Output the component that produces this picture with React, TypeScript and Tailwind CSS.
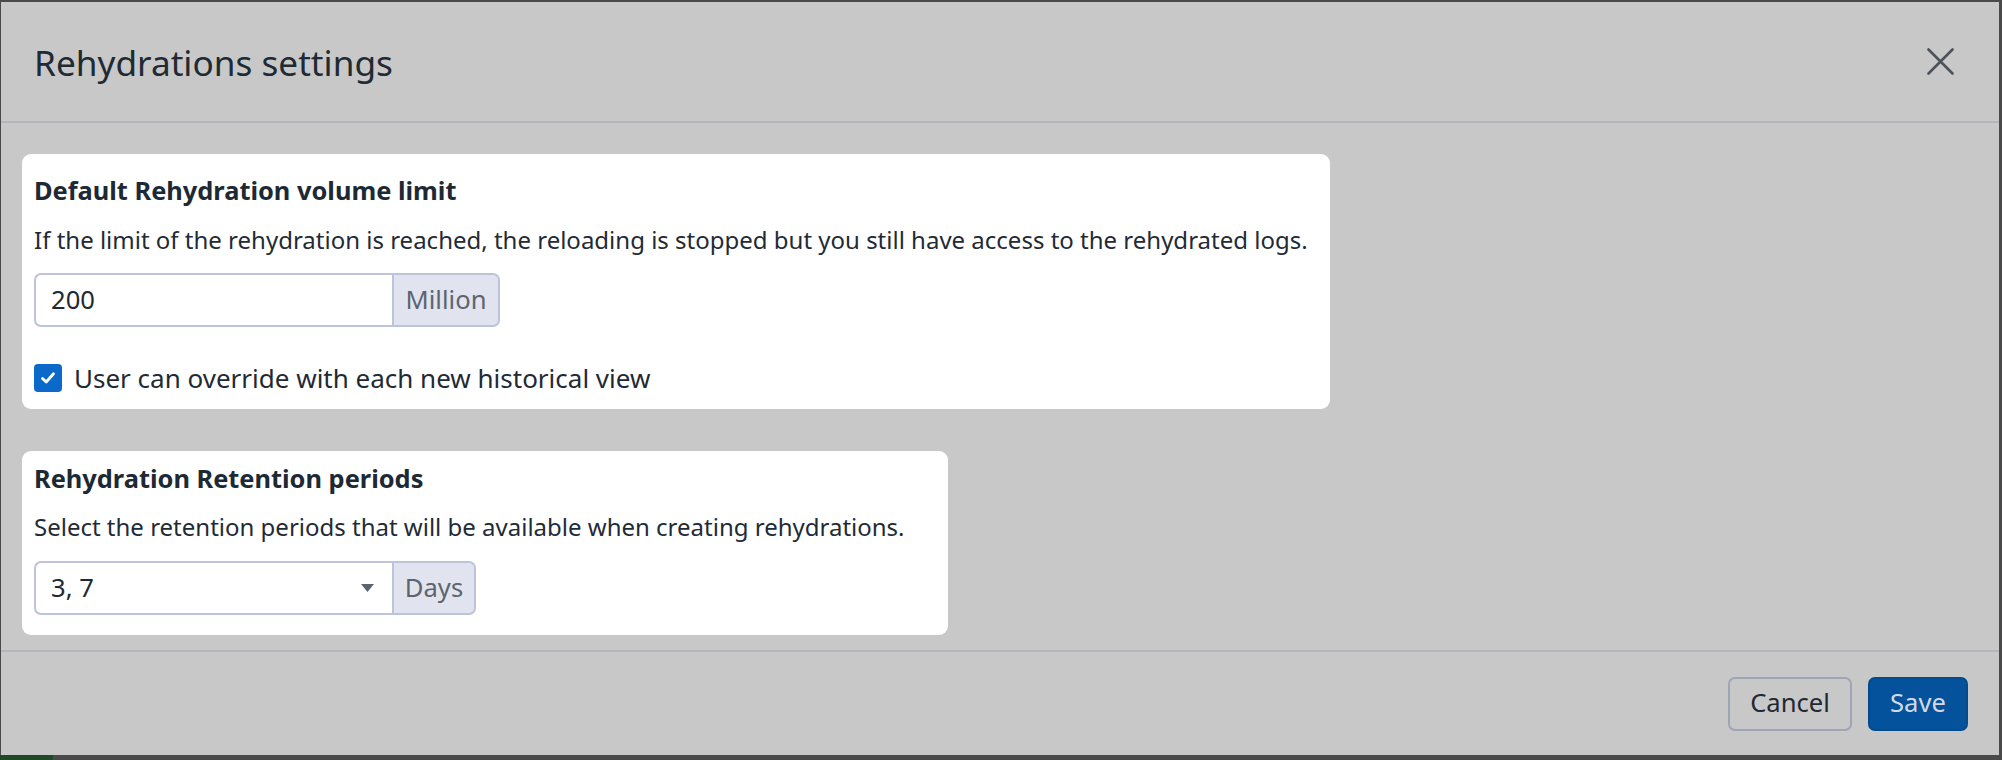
import React from "react";

const CloseIcon = () => (
  <svg width="27" height="27" viewBox="0 0 27 27" fill="none">
    <path d="M1.5 1.5L25.5 25.5M25.5 1.5L1.5 25.5" stroke="#4b5259" strokeWidth="2.6" strokeLinecap="round" />
  </svg>
);

const CheckIcon = () => (
  <svg width="18" height="18" viewBox="0 0 18 18" fill="none">
    <path d="M3.5 9.5L7.2 13L14.5 4.8" stroke="white" strokeWidth="2.8" strokeLinecap="round" strokeLinejoin="round" />
  </svg>
);

const App = () => {
  return (
    <div className="relative w-[2002px] h-[760px] overflow-hidden bg-[#4a4a4a] font-['Noto_Sans',sans-serif]">
      <div className="ml-[1px] mt-[2px] w-[1998px] h-[753px] bg-[#c8c8c8] flex flex-col">
        {/* header */}
        <div className="h-[119px] flex items-center justify-between pl-[33px] pr-[45px]">
          <h1 className="text-[35.2px] leading-[42px] text-[#1f2a33]">Rehydrations settings</h1>
          <button className="w-[27px] h-[27px] flex items-center justify-center">
            <CloseIcon />
          </button>
        </div>
        <div className="h-[2px] bg-[#b4b5be]" />

        {/* body */}
        <div className="flex-1 flex flex-col items-start pl-[21px] pt-[31px]">
          <div className="w-[1308px] bg-white rounded-[9px] pt-[17px] pb-[12px] px-[12px]">
            <div className="text-[25.4px] leading-[38px] font-bold text-[#1d2934]">
              Default Rehydration volume limit
            </div>
            <p className="mt-[14px] text-[24px] leading-[34px] text-[#1f2b36]">
              If the limit of the rehydration is reached, the reloading is stopped but you still have access to the rehydrated logs.
            </p>
            <div className="mt-[16px] flex h-[54px] w-[466px]">
              <div className="w-[358px] flex items-center border-2 border-r-0 border-[#bcc3da] rounded-l-[7px] pl-[15px] text-[25.6px] text-[#1f2933]">
                200
              </div>
              <div className="flex-1 flex items-center justify-center border-2 border-[#bcc3da] rounded-r-[7px] bg-[#e1e4ee] text-[25.6px] text-[#5d6470]">
                Million
              </div>
            </div>
            <label className="mt-[32px] flex items-center gap-[12px] h-[38px]">
              <span className="w-[28px] h-[28px] rounded-[4px] bg-[#0b69c9] flex items-center justify-center">
                <CheckIcon />
              </span>
              <span className="text-[26px] leading-[38px] text-[#1f2a35]">
                User can override with each new historical view
              </span>
            </label>
          </div>

          <div className="mt-[42px] w-[926px] bg-white rounded-[9px] pt-[8px] pb-[20px] px-[12px]">
            <div className="text-[25.4px] leading-[38px] font-bold text-[#1d2934]">
              Rehydration Retention periods
            </div>
            <p className="mt-[13px] text-[24px] leading-[34px] text-[#1f2b36]">
              Select the retention periods that will be available when creating rehydrations.
            </p>
            <div className="mt-[17px] flex h-[54px] w-[442px]">
              <div className="w-[358px] flex items-center justify-between border-2 border-r-0 border-[#bcc3da] rounded-l-[7px] pl-[15px] pr-[18px] text-[25.6px] text-[#1f2933]">
                <span>3, 7</span>
                <svg width="13" height="8" viewBox="0 0 13 8">
                  <path d="M0 0H13L6.5 8Z" fill="#5c6470" />
                </svg>
              </div>
              <div className="flex-1 flex items-center justify-center border-2 border-[#bcc3da] rounded-r-[7px] bg-[#e1e4ee] text-[25.6px] text-[#5d6470]">
                Days
              </div>
            </div>
          </div>
          <div className="h-[13px]" />
        </div>

        <div className="h-[2px] bg-[#b4b5be]" />
        {/* footer */}
        <div className="h-[103px] flex items-center justify-end gap-[16px] pr-[31px]">
          <button className="w-[124px] h-[54px] rounded-[7px] border-2 border-[#a0a5b5] text-[25.6px] text-[#1f2933]">
            Cancel
          </button>
          <button className="w-[100px] h-[54px] rounded-[7px] border-2 border-[#024b8d] bg-[#03529b] text-[25.6px] text-[#d3dae4]">
            Save
          </button>
        </div>
      </div>
      <div className="absolute left-0 bottom-0 w-[53px] h-[5px] bg-[#1e4a28]" />
    </div>
  );
};

export default App;
